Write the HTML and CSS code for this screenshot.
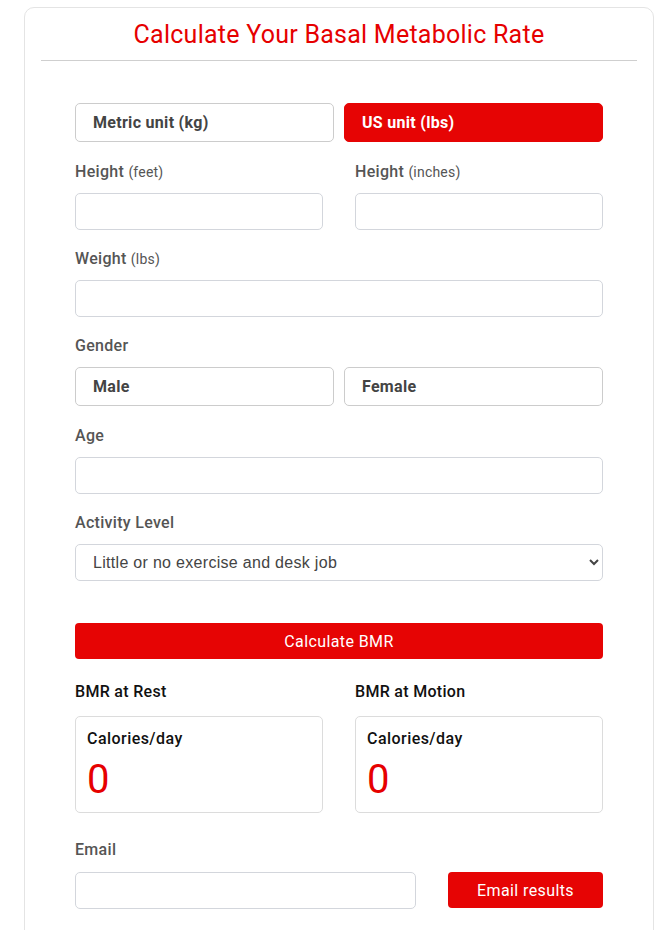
FILE: index.html
```html
<!DOCTYPE html>
<html lang="en">
<head>
<meta charset="utf-8">
<title>BMR Calculator</title>
<link rel="stylesheet" href="styles.css">
</head>
<body>
<div class="card">
  <h1 class="title">Calculate Your Basal Metabolic Rate</h1>
  <hr class="rule">
  <form class="form">
    <div class="pair pair-tight">
      <button type="button" class="toggle">Metric unit (kg)</button>
      <button type="button" class="toggle toggle-active">US unit (lbs)</button>
    </div>

    <div class="pair pair-wide group g-height">
      <div class="field">
        <label class="label">Height <span class="unit">(feet)</span></label>
        <input class="input" type="text">
      </div>
      <div class="field">
        <label class="label">Height <span class="unit">(inches)</span></label>
        <input class="input" type="text">
      </div>
    </div>

    <div class="group g-weight">
      <label class="label">Weight <span class="unit">(lbs)</span></label>
      <input class="input" type="text">
    </div>

    <div class="group g-gender">
      <label class="label">Gender</label>
      <div class="pair pair-tight">
        <button type="button" class="toggle">Male</button>
        <button type="button" class="toggle">Female</button>
      </div>
    </div>

    <div class="group g-age">
      <label class="label">Age</label>
      <input class="input" type="text">
    </div>

    <div class="group g-activity">
      <label class="label">Activity Level</label>
      <select class="select">
        <option>Little or no exercise and desk job</option>
      </select>
    </div>

    <button type="button" class="primary calc">Calculate BMR</button>

    <div class="pair pair-wide results">
      <div class="field">
        <div class="label label-dark result-label">BMR at Rest</div>
        <div class="result-box">
          <div class="result-unit">Calories/day</div>
          <div class="result-value">0</div>
        </div>
      </div>
      <div class="field">
        <div class="label label-dark result-label">BMR at Motion</div>
        <div class="result-box">
          <div class="result-unit">Calories/day</div>
          <div class="result-value">0</div>
        </div>
      </div>
    </div>

    <div class="email-group">
      <label class="label email-label">Email</label>
      <div class="email-row">
        <input class="input email-input" type="email">
        <button type="button" class="primary email-btn">Email results</button>
      </div>
    </div>
  </form>
</div>
</body>
</html>
```

FILE: styles.css
```css
* { box-sizing: border-box; }

html, body {
  margin: 0;
  padding: 0;
  background: #ffffff;
}

body {
  padding: 7px 3px 0 24px;
  font-family: Roboto, "Noto Sans", Arial, sans-serif;
  color: #555;
}

.card {
  border: 1px solid #e4e4e4;
  border-radius: 10px;
  padding: 13px 16px 40px;
  min-height: 960px;
}

.title {
  margin: 0;
  text-align: center;
  font-size: 25px;
  line-height: 28px;
  font-weight: 400;
  letter-spacing: 0.25px;
  color: #e60000;
}

.rule {
  margin: 11px 0 0;
  border: 0;
  border-top: 1px solid #cfcfcf;
  height: 0;
}

.form {
  padding: 42px 34px 0;
}

.pair {
  display: grid;
  grid-template-columns: 1fr 1fr;
}

.pair-tight { column-gap: 10px; }
.pair-wide { column-gap: 32px; }

.g-height { margin-top: 20px; }
.g-weight { margin-top: 19px; }
.g-gender { margin-top: 19px; }
.g-age { margin-top: 20px; }
.g-activity { margin-top: 19px; }

.field { display: flex; flex-direction: column; }

.label {
  display: block;
  font-size: 16px;
  line-height: 20px;
  font-weight: 500;
  letter-spacing: 0.3px;
  color: #555;
  margin-bottom: 11px;
}

.unit {
  font-size: 14px;
  font-weight: 400;
  letter-spacing: 0.2px;
}

.input {
  display: block;
  width: 100%;
  height: 37px;
  border: 1px solid #d3d6dc;
  border-radius: 5px;
  background: #fff;
  font-family: inherit;
  font-size: 16px;
  padding: 0 12px;
  margin: 0;
}

.toggle {
  height: 39px;
  border: 1px solid #ccc;
  border-radius: 5px;
  background: #fff;
  color: #444;
  font-family: Roboto, Arial, sans-serif;
  font-size: 16px;
  font-weight: 700;
  letter-spacing: 0.3px;
  text-align: left;
  padding: 0 17px;
  margin: 0;
}

.toggle-active {
  background: #e60404;
  border-color: #e60404;
  color: #fff;
}

.select {
  display: block;
  width: 100%;
  height: 37px;
  border: 1px solid #d3d6dc;
  border-radius: 5px;
  background: #fff;
  color: #444;
  font-family: "Liberation Sans", Arial, sans-serif;
  font-size: 16px;
  letter-spacing: 0.3px;
  padding: 0 10px 0 13px;
  margin: 0;
}

.primary {
  border: 0;
  border-radius: 4px;
  background: #e60404;
  color: #fff;
  font-family: Roboto, Arial, sans-serif;
  font-size: 16px;
  font-weight: 400;
  letter-spacing: 0.4px;
  margin: 0;
}

.calc {
  display: block;
  width: 100%;
  height: 36px;
  margin-top: 42px;
}

.results { margin-top: 23px; }

.label-dark { color: #111; }

.result-label { margin-bottom: 14px; }

.result-box {
  height: 97px;
  border: 1px solid #dcdcdc;
  border-radius: 5px;
  padding: 12px 11px 0;
}

.result-unit {
  font-size: 16px;
  line-height: 20px;
  font-weight: 500;
  letter-spacing: 0.45px;
  color: #111;
}

.result-value {
  margin-top: 9px;
  font-size: 40px;
  line-height: 44px;
  color: #e60000;
}

.email-group { margin-top: 27px; }

.email-label { margin-bottom: 12px; }

.email-row {
  display: flex;
  column-gap: 32px;
  align-items: flex-start;
}

.email-input { flex: 0 0 341px; }

.email-btn {
  flex: 1;
  height: 36px;
}
```
